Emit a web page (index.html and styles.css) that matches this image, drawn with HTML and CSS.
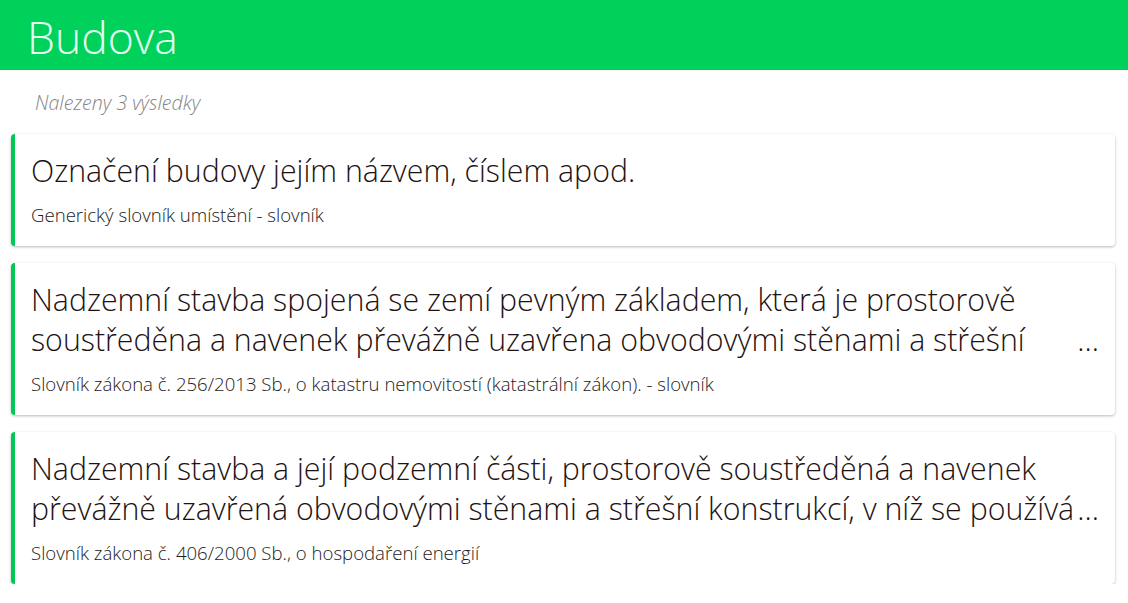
FILE: index.html
```html
<!DOCTYPE html>
<html lang="cs">
<head>
<meta charset="utf-8">
<title>Budova</title>
<link rel="stylesheet" href="styles.css">
</head>
<body>
<header class="topbar">
  <h1 class="topbar-title">Budova</h1>
</header>
<main class="results">
  <p class="results-count">Nalezeny 3 výsledky</p>
  <article class="card">
    <div class="card-title">Označení budovy jejím názvem, číslem apod.</div>
    <div class="card-source">Generický slovník umístění - slovník</div>
  </article>
  <article class="card">
    <div class="card-title clamp">Nadzemní stavba spojená se zemí pevným základem, která je prostorově soustředěna a navenek převážně uzavřena obvodovými stěnami a střešní konstrukcí<span class="more">...</span></div>
    <div class="card-source">Slovník zákona č. 256/2013 Sb., o katastru nemovitostí (katastrální zákon). - slovník</div>
  </article>
  <article class="card">
    <div class="card-title clamp">Nadzemní stavba a její podzemní části, prostorově soustředěná a navenek převážně uzavřená obvodovými stěnami a střešní konstrukcí, v níž se používá energie<span class="more">...</span></div>
    <div class="card-source">Slovník zákona č. 406/2000 Sb., o hospodaření energií</div>
  </article>
</main>
</body>
</html>
```
FILE: styles.css
```css
html, body {
  margin: 0;
  padding: 0;
  background: #ffffff;
  font-family: "Open Sans", "Noto Sans", sans-serif;
}

.topbar {
  background: #00d15b;
  height: 70px;
  display: flex;
  align-items: center;
  padding-left: 27px;
}

.topbar-title {
  margin: 0;
  font-weight: 300;
  font-size: 44.5px;
  color: #e2fff0;
  line-height: 1;
  position: relative;
  top: 2px;
}

.results {
  padding: 18px 13px 0 11px;
  display: flex;
  flex-direction: column;
  gap: 17px;
}

.results-count {
  margin: 4px 0 3px 24px;
  font-style: italic;
  font-weight: 300;
  font-size: 19.6px;
  color: #858585;
  line-height: 22px;
}

.card {
  background: #fff;
  border-left: 4px solid #00c853;
  border-radius: 4px;
  box-shadow: 0 1px 3px rgba(0, 0, 0, 0.28);
  padding: 17px 16px 19px 16px;
}

.card-title {
  font-size: 30.3px;
  font-weight: 300;
  line-height: 40px;
  color: #1e1212;
}

.card-title.clamp {
  position: relative;
  max-height: 80px;
  overflow: hidden;
  padding-right: 20px;
}

.more {
  position: absolute;
  right: 0;
  top: 40px;
  background: #fff;
  line-height: 40px;
}

.card-source {
  margin-top: 12px;
  font-size: 18.6px;
  font-weight: 300;
  line-height: 24px;
  color: #241a1a;
}
```
